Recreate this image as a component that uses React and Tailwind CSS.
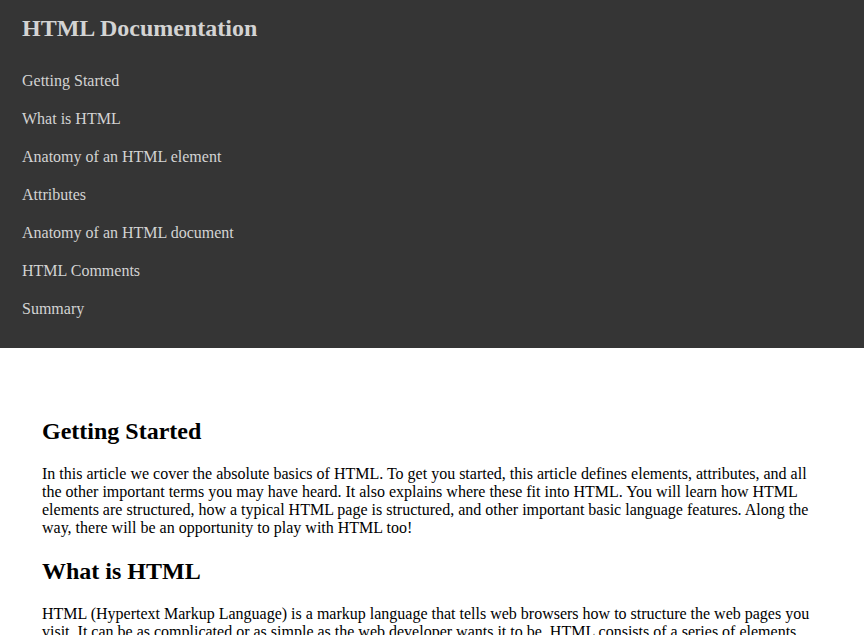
import React from 'react';

const LINKS = [
  'Getting Started',
  'What is HTML',
  'Anatomy of an HTML element',
  'Attributes',
  'Anatomy of an HTML document',
  'HTML Comments',
  'Summary',
];

const SECTIONS = [
  {
    title: 'Getting Started',
    body: 'In this article we cover the absolute basics of HTML. To get you started, this article defines elements, attributes, and all the other important terms you may have heard. It also explains where these fit into HTML. You will learn how HTML elements are structured, how a typical HTML page is structured, and other important basic language features. Along the way, there will be an opportunity to play with HTML too!',
  },
  {
    title: 'What is HTML',
    body: 'HTML (Hypertext Markup Language) is a markup language that tells web browsers how to structure the web pages you visit. It can be as complicated or as simple as the web developer wants it to be. HTML consists of a series of elements, which you use to enclose, or wrap, different parts of the content to make it appear a certain way, or act a certain way.',
  },
];

export default function App() {
  return (
    <div className="min-h-screen bg-white" style={{ fontFamily: '"Liberation Serif", "Times New Roman", serif' }}>
      {/* Navbar */}
      <nav className="bg-[#353535] px-[22px] pt-[14px] pb-[20px]">
        <h1 className="text-[24px] leading-[28px] font-bold text-[#d3d3d3]">HTML Documentation</h1>
        <ul className="mt-[20px]">
          {LINKS.map(l => (
            <li key={l} className="py-[10px] text-[16px] leading-[18px]">
              <a href={'#' + l.replace(/ /g, '_')} className="text-[#d3d3d3]">{l}</a>
            </li>
          ))}
        </ul>
      </nav>

      {/* Main doc */}
      <main className="px-[42px] pt-[69px] text-black">
        {SECTIONS.map((s, i) => (
          <section key={s.title} className={i > 0 ? 'mt-[20px]' : ''}>
            <h2 className="text-[24px] leading-[28px] font-bold">{s.title}</h2>
            <p className="mt-[20px] text-[16px] leading-[18px]">{s.body}</p>
          </section>
        ))}
      </main>
    </div>
  );
}
